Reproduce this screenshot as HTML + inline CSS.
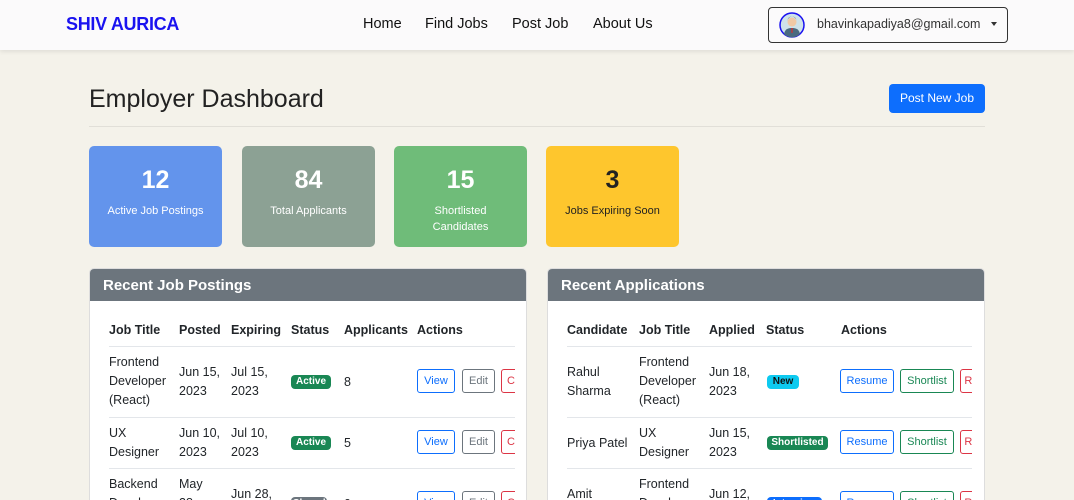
<!DOCTYPE html>
<html><head><meta charset="utf-8"><style>
*{box-sizing:border-box;margin:0;padding:0}
html,body{width:1074px;height:500px;overflow:hidden}
body{background:#f4f2ea;font-family:"Liberation Sans",sans-serif;color:#212529;position:relative}
.a{position:absolute;white-space:nowrap}
.nav{position:absolute;left:0;top:0;width:1074px;height:50px;background:#fbfafb;box-shadow:0 2px 4px rgba(0,0,0,.08)}
.card{position:absolute;top:146px;width:133px;height:101px;border-radius:5px;color:#fff;text-align:center}
.card b{display:block;font-size:25px;margin-top:20px}
.card span{display:block;font-size:11px;line-height:16px;margin-top:8px}
.panel{position:absolute;top:268px;width:438px;height:280px;background:#fff;border:1px solid #ddd;border-radius:5px;overflow:hidden}
.ph{height:32px;background:#6c757d;color:#fff;font-weight:bold;font-size:15px;padding:8px 13px}
.th{position:absolute;font-weight:bold;font-size:12.5px;top:54px;white-space:nowrap}
.td{position:absolute;font-size:12.5px;line-height:19px;white-space:nowrap}
.hr{position:absolute;left:19px;right:12px;height:1px;background:#e3e6ea}
.btn{position:absolute;height:24px;border:1px solid;border-radius:3px;font-size:11px;line-height:22px;text-align:center;background:#fff}
.bd{position:absolute;height:14px;border-radius:4px;font-size:10px;font-weight:bold;line-height:14px;text-align:center;color:#fff}
.clip{position:absolute;left:0;top:32px;width:425px;height:240px;overflow:hidden}
</style></head><body>
<div class="nav">
<div class="a" style="left:66px;top:14px;font-size:18px;font-weight:bold;color:#1a12f0;letter-spacing:-.3px">SHIV AURICA</div>
<div class="a" style="left:363px;top:16px;font-size:14.5px;color:#111">Home</div>
<div class="a" style="left:425px;top:16px;font-size:14.5px;color:#111">Find Jobs</div>
<div class="a" style="left:512px;top:16px;font-size:14.5px;color:#111">Post Job</div>
<div class="a" style="left:593px;top:16px;font-size:14.5px;color:#111">About Us</div>
<div class="a" style="left:768px;top:7px;width:240px;height:36px;border:1px solid #333;border-radius:4px"></div>
<svg class="a" style="left:779px;top:12px" width="26" height="26" viewBox="0 0 26 26"><circle cx="13" cy="13" r="12" fill="#cfe3ea" stroke="#1a12f0" stroke-width="1.5"/><circle cx="13" cy="10" r="4.5" fill="#f1c9a5"/><path d="M8.5 9a4.5 4.5 0 0 1 9 0c0-3-2-4.5-4.5-4.5S8.5 6 8.5 9z" fill="#444"/><path d="M5 22c1-5 4-6 8-6s7 1 8 6a11 11 0 0 1-16 0z" fill="#4a6b80"/><path d="M12.2 16h1.6l-.2 5h-1.2z" fill="#c33"/></svg>
<div class="a" style="left:817px;top:17px;font-size:12.5px;color:#333">bhavinkapadiya8@gmail.com</div>
<div class="a" style="left:991px;top:22px;width:0;height:0;border-left:3.5px solid transparent;border-right:3.5px solid transparent;border-top:4px solid #333"></div>
</div>
<div class="a" style="left:89px;top:85px;font-size:25px;color:#222">Employer Dashboard</div>
<div class="a" style="left:889px;top:84px;width:96px;height:29px;background:#0d6efd;border-radius:4px;color:#fff;font-size:12px;line-height:29px;text-align:center">Post New Job</div>
<div class="a" style="left:89px;top:126px;width:896px;height:1px;background:#e1dfd8"></div>
<div class="card" style="left:89px;background:#6394ec"><b>12</b><span>Active Job Postings</span></div>
<div class="card" style="left:242px;background:#8ca194"><b>84</b><span>Total Applicants</span></div>
<div class="card" style="left:394px;background:#6fbc79"><b>15</b><span>Shortlisted<br>Candidates</span></div>
<div class="card" style="left:546px;background:#fec62d;color:#222"><b>3</b><span>Jobs Expiring Soon</span></div>

<div class="panel" style="left:89px"><div class="ph">Recent Job Postings</div>
<div class="clip">
<div class="th" style="left:19px;top:22px">Job Title</div><div class="th" style="left:89px;top:22px">Posted</div><div class="th" style="left:141px;top:22px">Expiring</div><div class="th" style="left:201px;top:22px">Status</div><div class="th" style="left:254px;top:22px">Applicants</div><div class="th" style="left:327px;top:22px">Actions</div>
<div class="hr" style="top:45px;right:0"></div>
<div class="td" style="left:19px;top:52px">Frontend<br>Developer<br>(React)</div><div class="td" style="left:89px;top:62px">Jun 15,<br>2023</div><div class="td" style="left:141px;top:62px">Jul 15,<br>2023</div>
<div class="bd" style="left:201px;top:74px;width:40px;background:#198754">Active</div><div class="td" style="left:254px;top:72px">8</div>
<div class="btn" style="left:327px;top:68px;width:38px;border-color:#0d6efd;color:#0d6efd">View</div><div class="btn" style="left:372px;top:68px;width:33px;border-color:#6c757d;color:#6c757d">Edit</div><div class="btn" style="left:411px;top:68px;width:40px;border-color:#dc3545;color:#dc3545">Close</div>
<div class="hr" style="top:116px;right:0"></div>
<div class="td" style="left:19px;top:123px">UX<br>Designer</div><div class="td" style="left:89px;top:123px">Jun 10,<br>2023</div><div class="td" style="left:141px;top:123px">Jul 10,<br>2023</div>
<div class="bd" style="left:201px;top:135px;width:40px;background:#198754">Active</div><div class="td" style="left:254px;top:133px">5</div>
<div class="btn" style="left:327px;top:129px;width:38px;border-color:#0d6efd;color:#0d6efd">View</div><div class="btn" style="left:372px;top:129px;width:33px;border-color:#6c757d;color:#6c757d">Edit</div><div class="btn" style="left:411px;top:129px;width:40px;border-color:#dc3545;color:#dc3545">Close</div>
<div class="hr" style="top:167px;right:0"></div>
<div class="td" style="left:19px;top:174px">Backend<br>Developer</div><div class="td" style="left:89px;top:174px">May<br>28,</div><div class="td" style="left:141px;top:184px">Jun 28,</div>
<div class="bd" style="left:201px;top:196px;width:36px;background:#6c757d">Closed</div><div class="td" style="left:254px;top:194px">0</div>
<div class="btn" style="left:327px;top:190px;width:38px;border-color:#0d6efd;color:#0d6efd">View</div><div class="btn" style="left:372px;top:190px;width:33px;border-color:#6c757d;color:#6c757d">Edit</div><div class="btn" style="left:411px;top:190px;width:40px;border-color:#dc3545;color:#dc3545">Close</div>
</div></div>

<div class="panel" style="left:547px"><div class="ph">Recent Applications</div>
<div class="clip" style="width:424px">
<div class="th" style="left:19px;top:22px">Candidate</div><div class="th" style="left:91px;top:22px">Job Title</div><div class="th" style="left:161px;top:22px">Applied</div><div class="th" style="left:218px;top:22px">Status</div><div class="th" style="left:293px;top:22px">Actions</div>
<div class="hr" style="top:45px;right:0"></div>
<div class="td" style="left:19px;top:62px">Rahul<br>Sharma</div><div class="td" style="left:91px;top:52px">Frontend<br>Developer<br>(React)</div><div class="td" style="left:161px;top:62px">Jun 18,<br>2023</div>
<div class="bd" style="left:219px;top:74px;width:32px;background:#0dcaf0;color:#111">New</div>
<div class="btn" style="left:292px;top:68px;width:54px;border-color:#0d6efd;color:#0d6efd">Resume</div><div class="btn" style="left:352px;top:68px;width:54px;border-color:#198754;color:#198754">Shortlist</div><div class="btn" style="left:412px;top:68px;width:40px;border-color:#dc3545;color:#dc3545">Reject</div>
<div class="hr" style="top:116px;right:0"></div>
<div class="td" style="left:19px;top:133px">Priya Patel</div><div class="td" style="left:91px;top:123px">UX<br>Designer</div><div class="td" style="left:161px;top:123px">Jun 15,<br>2023</div>
<div class="bd" style="left:219px;top:135px;width:61px;background:#198754">Shortlisted</div>
<div class="btn" style="left:292px;top:129px;width:54px;border-color:#0d6efd;color:#0d6efd">Resume</div><div class="btn" style="left:352px;top:129px;width:54px;border-color:#198754;color:#198754">Shortlist</div><div class="btn" style="left:412px;top:129px;width:40px;border-color:#dc3545;color:#dc3545">Reject</div>
<div class="hr" style="top:167px;right:0"></div>
<div class="td" style="left:19px;top:184px">Amit<br>Kumar</div><div class="td" style="left:91px;top:174px">Frontend<br>Developer</div><div class="td" style="left:161px;top:184px">Jun 12,<br>2023</div>
<div class="bd" style="left:219px;top:196px;width:55px;background:#0d6efd">Interview</div>
<div class="btn" style="left:292px;top:190px;width:54px;border-color:#0d6efd;color:#0d6efd">Resume</div><div class="btn" style="left:352px;top:190px;width:54px;border-color:#198754;color:#198754">Shortlist</div><div class="btn" style="left:412px;top:190px;width:40px;border-color:#dc3545;color:#dc3545">Reject</div>
</div></div>
</body></html>
